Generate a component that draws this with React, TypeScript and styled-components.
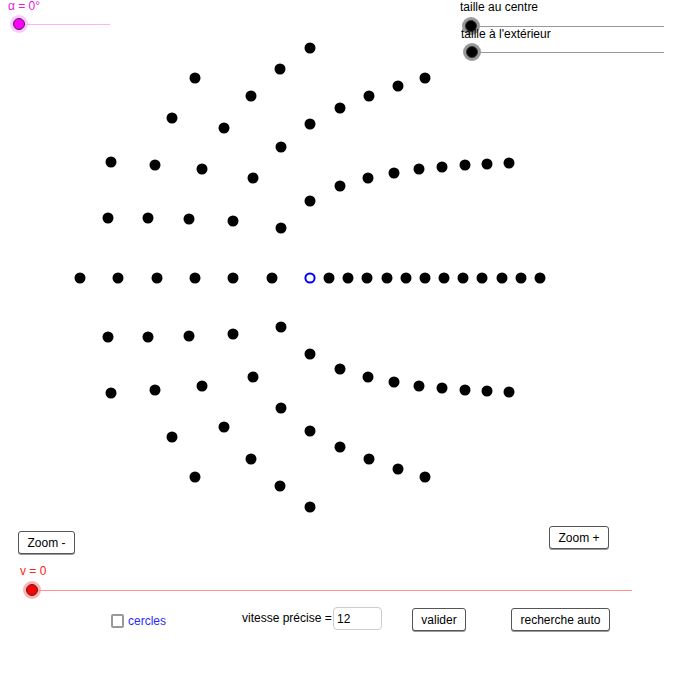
import * as React from 'react'
import styled, { createGlobalStyle } from 'styled-components'

const GlobalStyle = createGlobalStyle`
  html, body {
    margin: 0;
    padding: 0;
    background: #fff;
  }
  body {
    font-family: "Liberation Sans", Arial, sans-serif;
    font-size: 12px;
    color: #000;
  }
`

// upper half of the figure; the lower half is its mirror about y = 277.5
const upperDots: [number, number][] = [
  [310, 48], [280, 69], [195, 78], [425, 78], [398, 86], [251, 96], [369, 96],
  [340, 108], [172, 118], [310, 124], [224, 128], [281, 147], [111, 162],
  [509, 163], [487, 164], [465, 165], [155, 165], [442, 167], [419, 169],
  [202, 169], [394, 173], [253, 178], [368, 178], [340, 186], [310, 201],
  [108, 218], [148, 218], [189, 219], [233, 221], [281, 228],
]

const axisDots = [80, 118, 157, 195, 233, 272, 329, 348, 367, 387, 406, 425, 444, 463, 482, 502, 521, 540]

const AXIS_Y = 278

export default function App() {
  return (
    <>
      <GlobalStyle />
      <Page>
        <Stage>
          <Figure viewBox="0 0 700 520" width={700} height={520}>
            {upperDots.map(([x, y], i) => (
              <circle key={'u' + i} cx={x} cy={y} r={5.5} fill="#000" />
            ))}
            {upperDots.map(([x, y], i) => (
              <circle key={'l' + i} cx={x} cy={555 - y} r={5.5} fill="#000" />
            ))}
            {axisDots.map(x => (
              <circle key={'a' + x} cx={x} cy={AXIS_Y} r={5.5} fill="#000" />
            ))}
            <circle cx={310} cy={AXIS_Y} r={4.6} fill="#fff" stroke="#0000ff" strokeWidth={2} />
          </Figure>

          <TopControls>
            <SliderGroup>
              <SliderLabel color="#e020e0" $indent={8}>α = 0°</SliderLabel>
              <Slider $indent={10} $gap={3}>
                <Knob $fill="#ff00ff" $halo="rgba(255, 0, 255, 0.22)" />
                <Track $color="#ffb0ff" $width={85} />
              </Slider>
            </SliderGroup>

            <SliderGroup>
              <SliderLabel color="#000" $top={1}>taille au centre</SliderLabel>
              <Slider $indent={2} $gap={4}>
                <Knob $fill="#000" $halo="rgba(0, 0, 0, 0.4)" />
                <Track $color="#999" $width={187} />
              </Slider>
              <SliderLabel color="#000" $indent={1} $top={-7}>
                taille à l'extérieur
              </SliderLabel>
              <Slider $indent={3} $gap={3}>
                <Knob $fill="#000" $halo="rgba(0, 0, 0, 0.4)" />
                <Track $color="#999" $width={186} />
              </Slider>
            </SliderGroup>
          </TopControls>
        </Stage>

        <ZoomRow>
          <Button $top={11} $width={57}>Zoom -</Button>
          <Button $top={6} $width={60}>Zoom +</Button>
        </ZoomRow>

        <SpeedSection>
          <SliderLabel color="#ff2020" $indent={20}>v = 0</SliderLabel>
          <Slider $indent={23} $gap={4}>
            <Knob $fill="#ff0000" $halo="rgba(255, 0, 0, 0.3)" />
            <Track $color="#ff9090" $width={594} />
          </Slider>
        </SpeedSection>

        <BottomRow>
          <CheckGroup>
            <CheckBox />
            <CheckText>cercles</CheckText>
          </CheckGroup>
          <SpeedLabel>vitesse précise =</SpeedLabel>
          <SpeedInput defaultValue="12" />
          <Button $top={1} $width={54} $left={30}>valider</Button>
          <Button $top={1} $width={99} $left={45}>recherche auto</Button>
        </BottomRow>
      </Page>
    </>
  )
}

const Page = styled.div`
  width: 700px;
  height: 700px;
  display: flex;
  flex-direction: column;
  background: #fff;
  overflow: hidden;
`

const Stage = styled.div`
  display: grid;
  height: 520px;

  > * {
    grid-area: 1 / 1;
  }
`

const Figure = styled.svg`
  display: block;
`

const TopControls = styled.div`
  display: flex;
  justify-content: space-between;
  align-items: flex-start;
  padding-right: 36px;
  pointer-events: none;
  align-self: start;
`

const SliderGroup = styled.div`
  display: flex;
  flex-direction: column;
  align-items: flex-start;
`

const SliderLabel = styled.div<{ color: string; $indent?: number; $top?: number }>`
  color: ${p => p.color};
  font-size: 12px;
  line-height: 12px;
  white-space: nowrap;
  margin-left: ${p => p.$indent ?? 0}px;
  margin-top: ${p => p.$top ?? 0}px;
  position: relative;
`

const Slider = styled.div<{ $indent: number; $gap: number }>`
  display: flex;
  align-items: center;
  margin-left: ${p => p.$indent}px;
  margin-top: ${p => p.$gap}px;
`

const Knob = styled.div<{ $fill: string; $halo: string }>`
  box-sizing: border-box;
  width: 12px;
  height: 12px;
  margin: 3px;
  border-radius: 50%;
  background: ${p => p.$fill};
  border: 1px solid #333;
  box-shadow: 0 0 0 3px ${p => p.$halo};
  flex: none;
`

const Track = styled.div<{ $color: string; $width: number }>`
  width: ${p => p.$width}px;
  height: 1px;
  background: ${p => p.$color};
  margin-left: -3px;
`

const ZoomRow = styled.div`
  height: 35px;
  display: flex;
  justify-content: space-between;
  align-items: flex-start;
  padding: 0 91px 0 18px;
`

const Button = styled.button<{ $top: number; $width: number; $left?: number }>`
  box-sizing: border-box;
  width: ${p => p.$width}px;
  height: 23px;
  margin-top: ${p => p.$top}px;
  margin-left: ${p => p.$left ?? 0}px;
  padding: 0;
  background: #fff;
  border: 1px solid #555;
  border-radius: 3px;
  box-shadow: 0 1px 0 #999;
  font-family: "Liberation Sans", Arial, sans-serif;
  font-size: 12px;
  color: #000;
  flex: none;
`

const SpeedSection = styled.div`
  height: 44px;
  padding-top: 10px;
  box-sizing: border-box;
  display: flex;
  flex-direction: column;
  align-items: flex-start;
`

const BottomRow = styled.div`
  display: flex;
  align-items: flex-start;
  margin-top: 8px;
  padding-left: 111px;
`

const CheckGroup = styled.label`
  display: flex;
  align-items: center;
  gap: 4px;
  width: 131px;
  height: 14px;
  margin-top: 7px;
`

const CheckBox = styled.span`
  box-sizing: border-box;
  width: 13px;
  height: 14px;
  border: 2px solid #999;
  border-radius: 2px;
  background: #fff;
  flex: none;
`

const CheckText = styled.span`
  color: #2a2aff;
  font-size: 12px;
`

const SpeedLabel = styled.span`
  line-height: 23px;
  font-size: 12px;
  white-space: nowrap;
  width: 91px;
`

const SpeedInput = styled.input`
  box-sizing: border-box;
  width: 49px;
  height: 23px;
  padding: 0 3px;
  border: 1px solid #ccc;
  border-radius: 4px;
  font-family: "Liberation Sans", Arial, sans-serif;
  font-size: 12px;
  color: #000;
  outline: none;
`
